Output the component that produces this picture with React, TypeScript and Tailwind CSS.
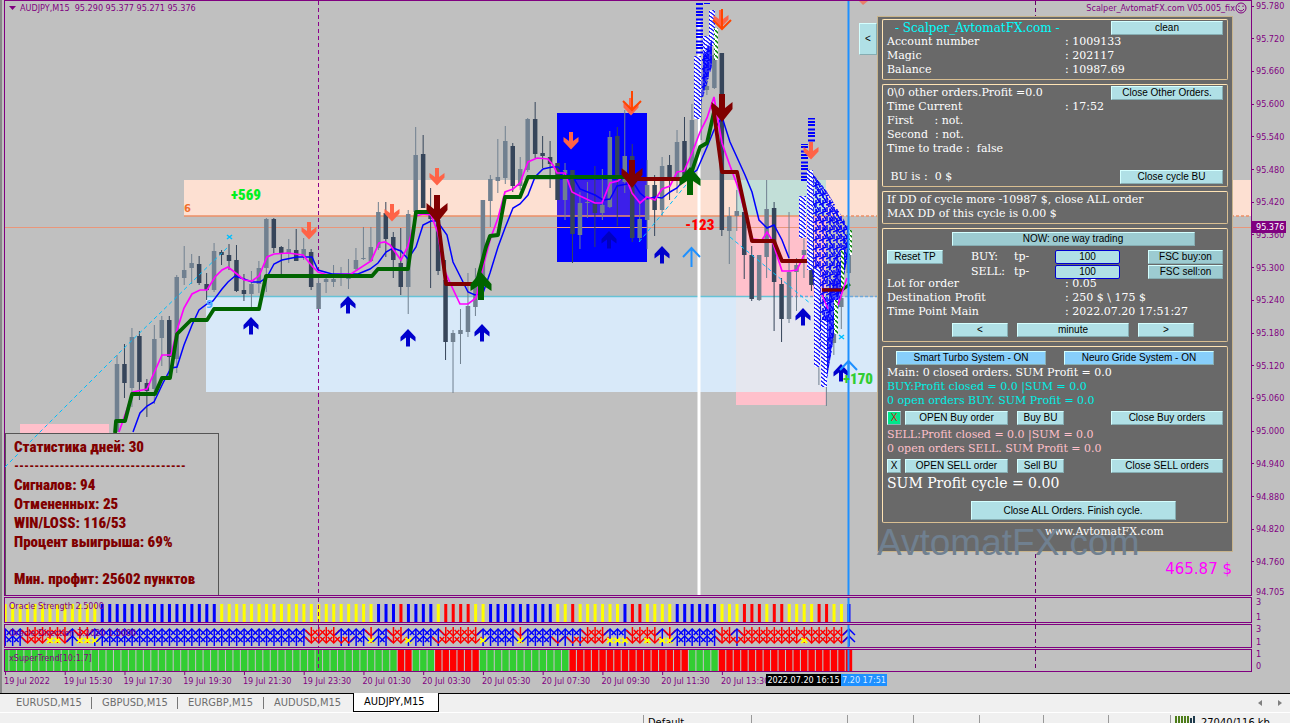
import React from "react";

type Candle = [number, number, number, number, string];

const STEP = 7.467;
const SANS = "font-['DejaVu_Sans_Condensed','DejaVu_Sans',sans-serif]";
const IMPACT = "font-['Roboto_Condensed','Roboto',sans-serif] font-black";

// high, body top, body bottom, low, colour (L = up, D = down)
const candles: Candle[] = [
  [355, 364, 432, 432, "L"], [344, 364, 383, 398, "D"], [328, 337, 388, 407, "L"],
  [331, 336, 382, 400, "D"], [379, 383, 391, 417, "D"], [325, 339, 389, 404, "L"],
  [316, 320, 338, 366, "L"], [316, 320, 357, 380, "D"], [275, 277, 359, 373, "L"],
  [246, 270, 278, 285, "L"], [254, 263, 268, 284, "L"], [256, 264, 283, 285, "D"],
  [273, 284, 290, 300, "D"], [243, 251, 290, 292, "L"], [250, 252, 255, 265, "D"],
  [244, 255, 261, 270, "D"], [245, 260, 291, 292, "D"], [274, 290, 294, 301, "D"],
  [271, 284, 294, 307, "L"], [261, 268, 284, 293, "L"], [218, 219, 268, 292, "L"],
  [218, 219, 248, 253, "D"], [246, 247, 253, 274, "D"], [239, 249, 254, 263, "L"],
  [229, 250, 261, 261, "D"], [238, 249, 256, 260, "L"], [249, 252, 287, 290, "D"],
  [276, 283, 309, 309, "L"], [275, 279, 282, 293, "L"], [265, 279, 282, 287, "L"],
  [267, 274, 276, 286, "L"], [259, 277, 279, 289, "L"], [248, 260, 269, 270, "L"],
  [227, 258, 259, 260, "L"], [227, 247, 261, 262, "L"], [202, 212, 248, 250, "L"],
  [202, 213, 239, 257, "D"], [232, 237, 260, 278, "D"], [228, 263, 287, 295, "D"],
  [210, 214, 287, 314, "L"], [127, 155, 212, 213, "L"], [135, 154, 208, 208, "D"],
  [188, 213, 219, 288, "D"], [213, 220, 271, 275, "D"], [260, 280, 342, 360, "D"],
  [330, 333, 342, 393, "L"], [309, 330, 334, 364, "L"], [273, 306, 332, 337, "L"],
  [268, 283, 307, 316, "L"], [200, 200, 280, 280, "L"], [175, 179, 201, 227, "L"],
  [139, 177, 181, 193, "L"], [126, 141, 178, 184, "L"], [143, 146, 186, 192, "D"],
  [157, 169, 186, 190, "L"], [118, 119, 170, 172, "L"], [102, 119, 154, 158, "D"],
  [136, 153, 156, 168, "D"], [141, 157, 164, 188, "D"], [163, 163, 200, 200, "D"],
  [163, 170, 200, 220, "L"], [170, 170, 234, 263, "D"], [192, 203, 235, 249, "L"],
  [182, 202, 203, 218, "L"], [166, 204, 213, 247, "D"], [169, 205, 213, 220, "L"],
  [131, 137, 207, 208, "L"], [127, 136, 175, 226, "D"], [110, 156, 182, 193, "L"],
  [144, 156, 238, 242, "D"], [203, 219, 238, 242, "L"], [160, 185, 220, 249, "L"],
  [175, 185, 210, 236, "D"], [157, 166, 210, 216, "L"], [155, 165, 181, 200, "D"],
  [130, 142, 180, 193, "L"], [117, 141, 177, 180, "D"], [104, 120, 172, 178, "L"],
  [90, 95, 140, 150, "L"], [80, 86, 90, 95, "L"], [50, 55, 88, 89, "L"],
  [53, 53, 230, 236, "D"], [207, 216, 231, 264, "L"], [190, 211, 216, 231, "L"],
  [212, 212, 255, 279, "D"], [246, 255, 299, 301, "D"], [255, 255, 300, 301, "L"],
  [180, 209, 257, 278, "L"], [202, 208, 282, 331, "D"], [278, 284, 319, 342, "D"],
  [212, 272, 319, 323, "L"], [258, 265, 272, 311, "L"], [237, 250, 255, 278, "L"],
  [220, 225, 285, 291, "D"], [293, 300, 330, 385, "L"], [330, 340, 370, 406, "L"],
  [320, 333, 343, 355, "L"], [283, 298, 307, 329, "L"], [232, 232, 273, 274, "L"],
];

const magenta =
  "119,432 133,392 147,389 154,373 162,355 171,355 177,330 184,308 192,294 200,290 207,290 215,277 222,270 228,267 237,274 244,280 252,281 259,276 267,257 274,254 288,253 303,255 312,266 318,272 328,275 351,274 371,261 379,243 385,242 390,245 401,260 408,246 416,216 423,214 431,215 438,233 443,267 452,287 460,304 468,304 476,298 483,267 490,240 498,218 505,192 513,189 520,183 528,162 537,158 548,159 553,165 557,173 565,173 572,192 580,196 595,203 602,203 610,183 618,181 625,175 632,193 640,203 647,197 655,200 662,189 670,186 677,172 684,171 692,153 700,132 707,118 714,97 722,143 729,163 739,190 752,239 762,240 767,232 772,240 782,271 790,271 797,270 804,255";

const blue =
  "133,432 140,413 147,406 154,402 163,383 171,368 177,367 184,345 192,325 199,310 207,304 213,301 222,289 228,282 235,276 244,279 252,282 260,282 267,277 274,264 282,260 297,257 312,257 318,270 332,274 358,274 370,269 378,263 386,252 393,248 401,251 408,259 416,247 423,225 431,221 437,221 447,235 453,262 461,278 468,292 475,295 483,293 490,273 498,247 505,228 513,208 520,204 528,195 535,177 543,169 552,167 558,167 565,174 573,177 580,189 595,195 603,200 610,199 617,186 627,184 633,182 640,193 647,199 655,197 662,198 670,192 677,188 684,180 697,170 707,147 714,130 722,117 730,142 745,175 752,192 759,220 767,228 774,225 782,240 789,258";

const greenLines = [
  "115,433 116,421 125,421 132,394 155,394 162,378 170,378 177,334 191,320 207,320 214,309 259,309 266,276 372,276 378,269 408,269 416,212 431,212",
  "476,285 481,266 486,247 490,236 498,235 505,197 520,197 528,177 628,177",
  "690,177 700,147 707,143 714,112",
];

const maroonLines = [
  "437,212 446,284 474,284",
  "632,179 684,179",
  "713,105 722,172 737,172 752,241 774,241 782,261 807,261",
  "822,290 842,290",
];

const smallDown = [[309, 222], [392, 204], [437, 168], [571, 132], [631, 98], [721, 10], [811, 142]];
const smallUp = [[251, 317], [348, 296], [408, 329], [482, 324], [662, 246], [803, 308], [841, 364]];

const prices = [
  "95.780", "95.720", "95.660", "95.600", "95.540", "95.480", "95.420", "95.360", "95.300",
  "95.240", "95.180", "95.120", "95.060", "95.000", "94.940", "94.880", "94.820", "94.760",
];

const times = [
  "19 Jul 2022", "19 Jul 15:30", "19 Jul 17:30", "19 Jul 19:30", "19 Jul 21:30", "19 Jul 23:30",
  "20 Jul 01:30", "20 Jul 03:30", "20 Jul 05:30", "20 Jul 07:30", "20 Jul 09:30", "20 Jul 11:30",
  "20 Jul 13:30",
];

// one letter per bar
const strength =
  "Y".repeat(13) + "B".repeat(16) + "Y".repeat(21) + "BBBRBBBBYRRRRYY" + "B".repeat(9) +
  "YYRYYYYYYBRRYYYYBBBBBBYYYRRRYRRYYYYRRYYB";
const direction =
  "BBBRRRYYRBYYy" + "B".repeat(28) + "RRRRMMBBYBBRRyBBBMRRRRRyBBBBYBBBBMBMMRRRyyyRRYRyYBBBBBBRRM" +
  "RRRRRRRRYRRRRRB";
const trend =
  "G".repeat(53) + "RRGGG" + "R".repeat(6) + "G".repeat(12) + "R".repeat(16) + "GGGG" + "R".repeat(18);

const fills: Record<string, string> = { Y: "#ffff00", B: "#0000ff", R: "#ff0000", G: "#32cd32" };
const barX = (i: number) => 5.2 + i * STEP;

const DOWN = "M-2 0H2V9L7.5 5V9.500L0 17.500L-7.5 9.500V5L-2 9Z";
const UP = "M0 0L7.5 8V12.500L2 8.500V17.500H-2V8.500L-7.5 12.500V8Z";
const BIG_DOWN = "M-3 0H3V14L10.500 8V15L0 28L-10.500 15V8L-3 14Z";
const BIG_UP = "M0 0L10.500 12V19L3 14V28H-3V14L-10.500 19V12Z";

function Marks({ d, at, fill }: { d: string; at: number[][]; fill: string }) {
  return (
    <>
      {at.map(([x, y]) => (
        <path key={x} d={d} transform={`translate(${x} ${y})`} fill={fill} />
      ))}
    </>
  );
}

function Hatch({ x, y, w, h, id = "hatch" }: { x: number; y: number; w: number; h: number; id?: string }) {
  return <rect x={x} y={y} width={w} height={h} fill={`url(#${id})`} />;
}

function PriceChart() {
  return (
    <svg viewBox="5 1 1246 594" preserveAspectRatio="xMinYMin slice" className="block h-[594px] w-full" aria-label="AUDJPY M15 chart">
      <defs>
        <pattern id="hatch" width="5" height="4" patternUnits="userSpaceOnUse">
          <rect width="5" height="4" fill="#fff" />
          <path d="M0 0L5 4M3 -1L6 1" stroke="#00f" strokeWidth="1.200" />
        </pattern>
        <pattern id="greenHatch" width="5" height="5" patternUnits="userSpaceOnUse">
          <rect width="5" height="5" fill="#fff" />
          <path d="M0 0L5 5" stroke="#008000" strokeWidth="1.500" />
        </pattern>
        <pattern id="stripe" width="8" height="11" patternUnits="userSpaceOnUse">
          <path d="M0 1H8M0 4H8M0 8.500H8" stroke="#00f" strokeWidth="2" />
        </pattern>
        <pattern id="dense" width="7" height="9" patternUnits="userSpaceOnUse">
          <path d="M1 0V5M4 2V9M0 7L7 4M5 0L7 3" stroke="#00f" strokeWidth="1.500" />
        </pattern>
      </defs>

      <rect x="184" y="180" width="1070" height="36" fill="#fde0d2" />
      <rect x="206" y="297" width="671" height="95" fill="#d8e9f9" />
      <rect x="20" y="424" width="89" height="12" fill="#ffc0cb" />
      <rect x="736" y="180" width="90" height="36" fill="#c2dfd8" />
      <rect x="736" y="216" width="90" height="81" fill="#ffc0cb" />
      <rect x="736" y="297" width="90" height="95" fill="#e5e7ef" />
      <rect x="736" y="392" width="90" height="13" fill="#ffc0cb" />
      <rect x="557" y="113" width="90" height="149" fill="#0000ff" />
      <rect x="557" y="180" width="90" height="36" fill="#3c1fea" />

      <path d="M184 216H826" stroke="#ed8f66" strokeWidth="1.500" />
      <path d="M826 216H1251" stroke="#ed8f66" strokeWidth="1.500" strokeDasharray="3 2" />
      <path d="M5 227.500H1251" stroke="#e9967a" />
      <path d="M206 296.500H790" stroke="#66c2d6" strokeWidth="1.500" />
      <path d="M790 296.500H877" stroke="#6fa8d8" strokeWidth="1.500" strokeDasharray="3 2" />
      <path d="M318.500 1V595" stroke="#8b008b" strokeDasharray="4 3" />
      <path d="M1035.500 1V595" stroke="#660066" strokeDasharray="4 3" />

      {candles.map(([hi, top, bottom, lo, c], i) => {
        const x = 117 + i * STEP;
        const fill = c === "L" ? "#708090" : "#36455a";
        return (
          <g key={i} fill={fill}>
            <rect x={x - 0.5} y={hi} width="1" height={lo - hi} />
            <rect x={x - 2.25} y={top} width="4.500" height={Math.max(bottom - top, 1)} />
          </g>
        );
      })}

      <path d="M699 20V595" stroke="#fff" strokeWidth="3" />

      <polyline points={blue} fill="none" stroke="#0000ff" strokeWidth="1.500" />
      <polyline points={magenta} fill="none" stroke="#ff00ff" strokeWidth="1.700" />
      {greenLines.map((p) => (
        <polyline key={p} points={p} fill="none" stroke="#006400" strokeWidth="3.800" strokeLinejoin="round" />
      ))}
      {maroonLines.map((p) => (
        <polyline key={p} points={p} fill="none" stroke="#800000" strokeWidth="3.800" strokeLinejoin="round" />
      ))}

      <rect x="5.500" y="433.500" width="213" height="162" fill="#c0c0c0" stroke="#555" />
      <g fill="none" stroke="#00bfff" strokeDasharray="4 3">
        <path d="M5 467L33 439L117 355L229 246" />
        <path d="M639 242L690 180" />
        <path d="M730 237L811 304" />
      </g>
      <path d="M227 235L232 239M232 235L227 239M839 335L844 339M844 335L839 339" stroke="#00bfff" strokeWidth="1.500" />

      {/* first group of orders */}
      <rect x="696" y="3" width="7" height="52" fill="url(#stripe)" />
      <path d="M704 3.500H710" stroke="#00f" />
      <Hatch x={694} y={56} w={7} h={63} />
      <Hatch x={703} y={36} w={6} h={30} />
      <Hatch x={709} y={10} w={6} h={36} />
      <path d="M702 55L712 40V66L707 84L701 104Z" fill="url(#dense)" />
      <path d="M703 56L712 42V64L706 82L702 98Z" fill="#0000ff" opacity=".7" />
      <Hatch x={714} y={28} w={4} h={32} id="greenHatch" />

      {/* second group of orders */}
      <rect x="808" y="118" width="7" height="24" fill="url(#stripe)" />
      <rect x="801" y="144" width="7" height="39" fill="url(#stripe)" />
      <path d="M809 169L826 190L850 230V247L838 300L832 350L825 388L818 330L812 270Z" fill="url(#dense)" />
      <path d="M821 330L838 270L848 240L840 290L832 345L825 386Z" fill="#0000ff" opacity=".55" />
      <g fill="none" stroke="#0000ff" strokeWidth="1.200" strokeDasharray="4 1">
        <path d="M810 171L848 231M812 178L846 236M816 196L847 244" />
        <path d="M812 200L838 260L826 330M814 260L836 290M848 236L818 290" />
        <path d="M848 240L816 340M849 244L822 370M847 256L832 340L826 382" />
      </g>
      <Hatch x={799} y={196} w={7} h={42} />
      <Hatch x={807} y={170} w={6} h={100} />
      <Hatch x={814} y={268} w={6} h={99} />
      <Hatch x={821} y={320} w={6} h={67} />
      <Hatch x={848} y={230} w={4} h={25} id="greenHatch" />
      <Hatch x={841} y={250} w={3} h={40} id="greenHatch" />
      <Hatch x={834} y={300} w={4} h={34} id="greenHatch" />
      <path d="M822 290H842" stroke="#800000" strokeWidth="3" />
      <path d="M842 290L850 284" stroke="#006400" strokeWidth="3" />
      <path d="M822 295L828 309M838 305L847 278" fill="none" stroke="#ff00ff" strokeWidth="1.500" />

      <path d="M848.500 1V595" stroke="#1e90ff" strokeWidth="2" />

      <Marks d={DOWN} at={smallDown} fill="#ff6347" />
      <Marks d={UP} at={smallUp} fill="#0000cd" />
      <Marks d={UP} at={[[609, 231]]} fill="#0000c0" />
      <Marks d={BIG_DOWN} at={[[437, 195], [632, 160], [722, 94]]} fill="#800000" />
      <Marks d={BIG_UP} at={[[481, 272], [690, 167]]} fill="#006400" />
      <g fill="none" strokeWidth="2">
        <path d="M691.500 267V248M683 257L691.500 248L700 257" stroke="#1e90ff" />
        <path d="M848.500 380V361M840 370L848.500 361L857 370" stroke="#1e90ff" />
        <path d="M632 91V110M623 101L632 110L641 101" stroke="#ff4500" />
        <path d="M722 9V29M713 20L722 29L731 20" stroke="#ff4500" />
      </g>
      <path d="M859 1H868L863 5Z" fill="#e9806a" />

      <g className={IMPACT} fontSize="15">
        <text x="231" y="200" fill="#00f020">+569</text>
        <text x="685" y="230" fill="#ff0000">-123</text>
        <text x="843" y="384" fill="#32cd32">+170</text>
      </g>
      <g className="font-['DejaVu_Sans',sans-serif] font-bold" fontSize="10">
        <text x="184" y="212" fill="#f07030">6</text>
        <text x="206" y="308" fill="#4aa8ff">9</text>
      </g>
    </svg>
  );
}

function Indicator({ title, scale, top, height, children }: {
  title: string;
  scale: string[];
  top: number;
  height: number;
  children: React.ReactNode;
}) {
  return (
    <section className="mt-px flex">
      <div className="relative min-w-0 flex-1 overflow-hidden border border-[#800080]">
        <svg
          viewBox={`5 ${top} 1246 ${height}`}
          preserveAspectRatio="xMinYMin slice"
          className="block w-full"
          style={{ height }}
        >
          {children}
          <path d={`M318.500 ${top}v${height}`} stroke="#8b008b" strokeDasharray="4 3" />
          <path d={`M1035.500 ${top}v${height}`} stroke="#660066" strokeDasharray="4 3" />
          <path d={`M848.500 ${top}v${height}`} stroke="#1e90ff" strokeWidth="2" />
        </svg>
        <h2 className="absolute left-1 top-0.5 text-[9px] leading-3">{title}</h2>
      </div>
      <div className="flex w-[38px] flex-col justify-between pl-1 text-[9px] leading-[11px]">
        {scale.map((s) => (
          <span key={s}>{s}</span>
        ))}
      </div>
    </section>
  );
}

function DirectionArrow({ type, x }: { type: string; x: number }) {
  const up = type === "B" || type === "y" || type === "M";
  const topColor = up ? "#0000ff" : "#ff0000";
  const low = type === "M" ? "#ff0000" : topColor;
  return (
    <g fill="none" strokeWidth="1.500">
      <path d={up ? `M${x} 629V646` : `M${x} 627V643`} stroke={topColor} />
      <path d={up ? `M${x - 6} 635L${x} 629L${x + 6} 635` : `M${x - 6} 630L${x} 636L${x + 6} 630`} stroke={topColor} />
      {type === "Y" || type === "y" ? (
        <path d={`M${x - 3} 638L${x + 3} 643M${x + 3} 638L${x - 3} 643`} stroke="#ffff00" strokeWidth="2" />
      ) : (
        <path
          d={up && type !== "M" ? `M${x - 6} 642L${x} 636L${x + 6} 642` : `M${x - 6} 637L${x} 643L${x + 6} 637`}
          stroke={low}
        />
      )}
    </g>
  );
}

function Button({ className = "", color = "bg-[#b0e0e6]", children, ...rest }: React.ButtonHTMLAttributes<HTMLButtonElement> & { color?: string }) {
  return (
    <button
      type="button"
      className={`h-3.5 shrink-0 whitespace-nowrap border border-b-[#86adb2] border-l-[#d4ffff] border-r-[#86adb2] border-t-[#d4ffff] text-center font-['Liberation_Sans',sans-serif] text-[10px] leading-3 text-black ${color} ${className}`}
      {...rest}
    >
      {children}
    </button>
  );
}

function Group({ className = "", children }: { className?: string; children: React.ReactNode }) {
  return (
    <section className={`rounded-xs border border-b-[#d9bf92] border-l-[#ffe4b5] border-r-[#d9bf92] border-t-[#ffe4b5] px-1 ${className}`}>
      {children}
    </section>
  );
}

function Row({ label, value }: { label: string; value: string }) {
  return (
    <div className="flex">
      <span className="w-[178px]">{label}</span>
      <span>: {value}</span>
    </div>
  );
}

function TakeProfit({ side }: { side: string }) {
  const [value, setValue] = React.useState("100");
  return (
    <>
      <label htmlFor={`tp-${side}`} className="flex w-[84px]">
        <span className="w-[43px]">{side}:</span>
        <span>tp-</span>
      </label>
      <input
        id={`tp-${side}`}
        value={value}
        onChange={(e) => setValue(e.target.value)}
        className="h-3.5 w-[65px] rounded-xs border border-[#0000d0] bg-[#b0e0e6] text-center font-['Liberation_Sans',sans-serif] text-[10px] text-black"
      />
    </>
  );
}

function ScalperPanel() {
  return (
    <aside className="absolute right-[18px] top-[15px] w-[356px] border border-[#c8b48c] bg-[#696969] px-1 pb-3 pt-0.5 font-['DejaVu_Serif',serif] text-[11px] leading-3.5 text-white">
      <Button className="absolute -left-[19px] top-[6px] h-8 w-[18px]">&lt;</Button>
      <div className="flex flex-col gap-1">
        <Group className="pb-0.5 pt-px">
          <div className="flex justify-between">
            <h1 className="pl-2 text-xs leading-3.5 text-[#00ffff]">- Scalper_AvtomatFX.com -</h1>
            <Button className="w-28">clean</Button>
          </div>
          <Row label="Account number" value="1009133" />
          <Row label="Magic" value="202117" />
          <Row label="Balance" value="10987.69" />
        </Group>

        <Group className="pb-0.5 pt-px">
          <div className="flex justify-between">
            <span>0\0 other orders.Profit =0.0</span>
            <Button className="w-28">Close Other Orders.</Button>
          </div>
          <Row label="Time Current" value="17:52" />
          <p className="whitespace-pre">First      : not.</p>
          <p className="whitespace-pre">Second  : not.</p>
          <p className="whitespace-pre">Time to trade :  false</p>
          <div className="flex justify-between pt-3.5">
            <span className="whitespace-pre"> BU is :  0 $</span>
            <Button className="w-[103px]">Close cycle BU</Button>
          </div>
        </Group>

        <Group className="pb-0.5 pt-px">
          <p>If DD of cycle more -10987 $, close ALL order</p>
          <p>MAX DD of this cycle is 0.00 $</p>
        </Group>

        <Group className="pb-1 pt-[3px]">
          <div className="mb-1 flex justify-center pl-9">
            <Button className="w-[243px]" color="bg-[#9ccbd1]">NOW: one way trading</Button>
          </div>
          <div className="flex">
            <Button className="mr-7 w-14">Reset TP</Button>
            <TakeProfit side="BUY" />
            <Button className="ml-auto w-[75px]" color="bg-[#9ccbd1]">FSC buy:on</Button>
          </div>
          <div className="mt-px flex h-3 pl-[84px]">
            <TakeProfit side="SELL" />
            <Button className="ml-auto w-[75px]" color="bg-[#9ccbd1]">FSC sell:on</Button>
          </div>
          <Row label="Lot for order" value="0.05" />
          <Row label="Destination Profit" value="250 $ \ 175 $" />
          <Row label="Time Point Main" value="2022.07.20 17:51:27" />
          <div className="mt-1 flex justify-center gap-[9px] pl-9">
            <Button className="w-14" aria-label="previous">&lt;</Button>
            <Button className="w-28">minute</Button>
            <Button className="w-14" aria-label="next">&gt;</Button>
          </div>
        </Group>

        <Group className="pb-0.5 pt-1">
          <div className="mb-px flex justify-between px-[9px]">
            <Button className="w-[150px]" color="bg-[#87cefa]">Smart Turbo System - ON</Button>
            <Button className="w-[150px]" color="bg-[#87cefa]">Neuro Gride System - ON</Button>
          </div>
          <p>Main: 0 closed orders. SUM Profit = 0.0</p>
          <div className="text-[#00f0e6]">
            <p>BUY:Profit closed = 0.0 |SUM = 0.0</p>
            <p>0 open orders BUY. SUM Profit = 0.0</p>
          </div>
          <div className="my-[3px] flex">
            <Button className="w-3.5" color="bg-[#00e68a]">
              <span className="text-[#d02010]">X</span>
            </Button>
            <Button className="ml-1 w-[103px]">OPEN Buy order</Button>
            <Button className="ml-[9px] w-[47px]">Buy BU</Button>
            <Button className="ml-auto w-28">Close Buy orders</Button>
          </div>
          <div className="text-[#ffc0cb]">
            <p>SELL:Profit closed = 0.0 |SUM = 0.0</p>
            <p>0 open orders SELL. SUM Profit = 0.0</p>
          </div>
          <div className="mt-[3px] flex">
            <Button className="w-3.5">X</Button>
            <Button className="ml-1 w-[103px]">OPEN SELL order</Button>
            <Button className="ml-[9px] w-[47px]">Sell BU</Button>
            <Button className="ml-auto w-28">Close SELL orders</Button>
          </div>
          <p className="text-sm leading-5">SUM Profit cycle = 0.00</p>
          <div className="mt-2 flex justify-center pl-9">
            <Button className="h-[19px] w-[205px]">Close ALL Orders. Finish cycle.</Button>
          </div>
        </Group>
      </div>
      <a href="#site" className="ml-[163px] mt-0.5 block">www.AvtomatFX.com</a>
      <span className="pointer-events-none absolute -bottom-3 -left-px font-['Liberation_Sans',sans-serif] text-[37px] leading-10 text-[#708090]">
        AvtomatFX.com
      </span>
      <span className="absolute -bottom-7 right-0 font-['DejaVu_Sans',sans-serif] text-[15px] leading-5 text-[#ff00ff]">465.87 $</span>
    </aside>
  );
}

function Statistics() {
  return (
    <div className={`${IMPACT} absolute left-[9px] top-[437px] text-[15px] leading-[19px] text-[#800000]`}>
      <p>Статистика дней: 30</p>
      <p className="text-xs leading-[19px]">----------------------------------</p>
      <p>Сигналов: 94</p>
      <p>Отмененных: 25</p>
      <p>WIN/LOSS: 116/53</p>
      <p>Процент выигрыша: 69%</p>
      <p className="pt-[18px]">Мин. профит: 25602 пунктов</p>
    </div>
  );
}

const tabs = ["EURUSD,M15", "GBPUSD,M15", "EURGBP,M15", "AUDUSD,M15", "AUDJPY,M15"];

export default function App() {
  const [active, setActive] = React.useState("AUDJPY,M15");

  return (
    <div className={`${SANS} flex h-screen flex-col overflow-hidden bg-[#c0c0c0] text-[#800080]`}>
      <main className="border-l-2 border-[#888] pl-0.5">
        <section className="flex">
          <div className="relative min-w-0 flex-1 border border-[#800080]">
            <PriceChart />
            <header className="absolute inset-x-0 top-0 flex justify-between px-1 text-[9px] leading-3.5">
              <span className="flex items-center gap-1">
                <svg viewBox="0 0 7 4" className="h-1 w-[7px]">
                  <path d="M0 0H7L3.500 4Z" fill="#800080" />
                </svg>
                <span className="whitespace-pre">AUDJPY,M15  95.290 95.377 95.271 95.376</span>
              </span>
              <span className="flex items-center">
                Scalper_AvtomatFX.com V05.005_fix
                <svg viewBox="0 0 12 12" className="size-3" fill="none" stroke="#800080">
                  <circle cx="6" cy="6" r="5" />
                  <path d="M4 3.500V5M8 3.500V5M3 7Q6 11 9 7" />
                </svg>
              </span>
            </header>
            <Statistics />
            <ScalperPanel />
          </div>
          <div className="relative w-[38px] text-[9px] leading-3">
            <ul className="flex h-[568px] flex-col justify-between">
              {prices.map((p) => (
                <li key={p} className="flex items-center gap-0.5">
                  <i className="h-px w-0.5 bg-[#800080]" />
                  {p}
                </li>
              ))}
            </ul>
            <p className="mt-[18px] h-2.5 pl-1">94.705</p>
            <span className="absolute left-0 top-[221px] w-[34px] bg-[#800080] pl-1 text-white">95.376</span>
          </div>
        </section>

        <Indicator title="Oracle Strength 2.5000" scale={["3", "1"]} top={598} height={24}>
          {strength.split("").map((c, i) => (
            <rect key={i} x={barX(i) - 1.5} y="604" width="3" height="18" fill={fills[c]} />
          ))}
        </Indicator>
        <Indicator title="Oracle Direction 3.2020 1.5000" scale={["3", "1"]} top={625} height={22}>
          {direction.split("").map((c, i) => (
            <DirectionArrow key={i} type={c} x={barX(i)} />
          ))}
        </Indicator>
        <Indicator title="xSuperTrend[10:1.7]" scale={["1", "0"]} top={651} height={21}>
          {trend.split("").map((c, i) => (
            <rect key={i} x={barX(i) - 3.2} y="651" width="6.400" height="21" fill={fills[c]} />
          ))}
        </Indicator>

        <div className="relative">
          <svg viewBox="4 673 1286 21" preserveAspectRatio="xMinYMin slice" className="block h-[21px] w-full">
            {times.map((t, i) => (
              <g key={t} fill="#800080">
                <rect x={5 + i * 59.74} y="673" width="1" height="3" />
                <text x={4 + i * 59.74} y="685" fontSize="9">{t}</text>
              </g>
            ))}
          </svg>
          <div className="absolute left-[762px] top-0.5 flex text-[9px] leading-3">
            <span className="w-[75px] bg-black text-center text-white">2022.07.20 16:15</span>
            <span className="w-[46px] overflow-hidden whitespace-nowrap bg-[#1e90ff] text-center text-[#d8ecff]">7.20 17:51</span>
          </div>
        </div>
      </main>

      <nav className="flex h-[19px] shrink-0 border-t border-black bg-[#f0f0f0] pl-1.5 text-[11px]" role="tablist">
        {tabs.map((t) =>
          t === active ? (
            <button key={t} role="tab" aria-selected="true" className="-mt-px ml-[3px] w-[86px] border border-t-0 border-black bg-white pl-2.5 text-left text-black">
              {t}
            </button>
          ) : (
            <button key={t} role="tab" aria-selected="false" onClick={() => setActive(t)} className="flex w-[86px] items-center pl-2.5 text-[#6d6d6d] not-nth-4:after:ml-auto not-nth-4:after:h-3 not-nth-4:after:w-px not-nth-4:after:bg-[#777]">
              {t}
            </button>
          )
        )}
        <span className="ml-auto flex items-center gap-4 pr-2">
          <svg viewBox="0 0 4 6" className="h-1.5 w-1" fill="#808080"><path d="M4 0V6L0 3Z" /></svg>
          <svg viewBox="0 0 4 6" className="h-1.5 w-1" fill="#808080"><path d="M0 0V6L4 3Z" /></svg>
        </span>
      </nav>

      <footer className="flex shrink-0 border-t border-white bg-[#f0f0f0] pt-0.5 text-[11px] leading-4 text-black">
        <span className="min-w-0 flex-1" />
        <span className="w-[108px] border-l border-[#999] pl-1">Default</span>
        <span className="w-24 border-l border-[#999]" />
        <span className="w-[66px] border-l border-[#999]" />
        <span className="w-[66px] border-l border-[#999]" />
        <span className="w-16 border-l border-[#999]" />
        <span className="w-[65px] border-l border-[#999]" />
        <span className="w-[62px] border-l border-[#999]" />
        <span className="flex w-[120px] gap-1 border-l border-[#999] pl-1">
          <svg viewBox="0 0 22 14" className="h-3.5 w-[22px]">
            <path d="M1 1V14M4 1V14M7 1V14M10 1V14M13 1V14" stroke="#4e7d1a" strokeWidth="2" />
            <path d="M16 3V14M19 1V14" stroke="#1f3b4d" strokeWidth="2" />
          </svg>
          27040/116 kb
        </span>
      </footer>
    </div>
  );
}
